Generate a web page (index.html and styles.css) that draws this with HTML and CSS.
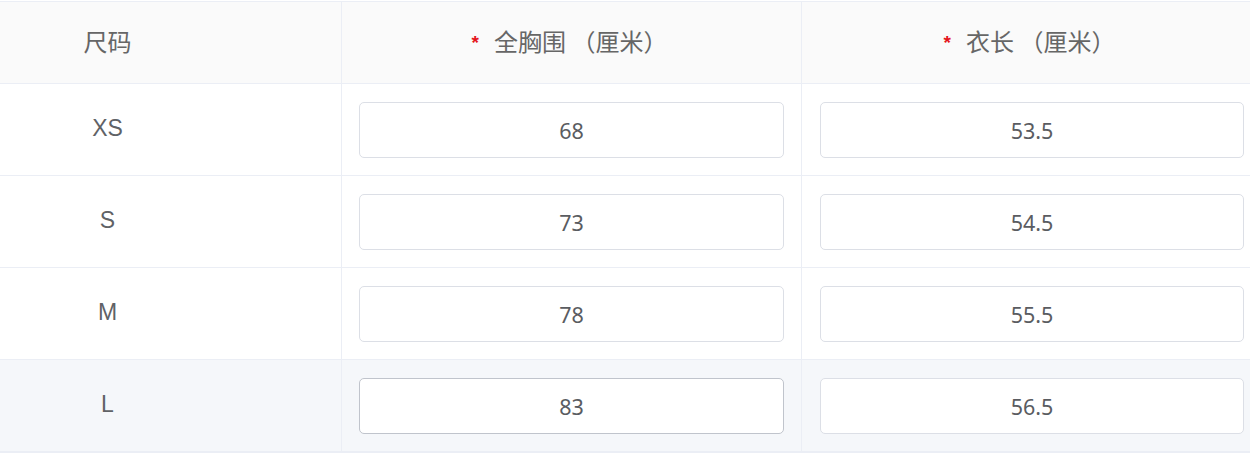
FILE: index.html
```html
<!DOCTYPE html>
<html lang="zh">
<head>
<meta charset="utf-8">
<title>尺码表</title>
<link rel="stylesheet" href="styles.css">
</head>
<body>
<div class="wrap">
  <div class="table">
    <div class="cell head first"><span class="size">尺码</span></div>
    <div class="cell head"><span class="star">*</span><span class="title">全胸围 （厘米）</span></div>
    <div class="cell head"><span class="star">*</span><span class="title">衣长 （厘米）</span></div>

    <div class="cell first"><span class="size latin">XS</span></div>
    <div class="cell"><div class="input">68</div></div>
    <div class="cell last-col"><div class="input">53.5</div></div>

    <div class="cell first"><span class="size latin">S</span></div>
    <div class="cell"><div class="input">73</div></div>
    <div class="cell last-col"><div class="input">54.5</div></div>

    <div class="cell first"><span class="size latin">M</span></div>
    <div class="cell"><div class="input">78</div></div>
    <div class="cell last-col"><div class="input">55.5</div></div>

    <div class="cell first hover"><span class="size latin">L</span></div>
    <div class="cell hover"><div class="input active">83</div></div>
    <div class="cell last-col hover"><div class="input">56.5</div></div>
  </div>
</div>
</body>
</html>
```

FILE: styles.css
```css
html, body {
  margin: 0;
  padding: 0;
  background: #ffffff;
}
body {
  font-family: "Noto Sans", "Noto Sans CJK SC", sans-serif;
  color: #606266;
}
.wrap {
  width: 1250px;
  height: 456px;
  overflow: hidden;
  padding-top: 1px;
  box-sizing: border-box;
}
.table {
  display: grid;
  grid-template-columns: 342px 460px 460px;
  grid-auto-rows: 92px;
  grid-template-rows: 82px;
  width: 1262px;
  border-top: 1px solid #ebeef5;
  border-bottom: 1px solid #ebeef5;
}
.cell {
  box-sizing: border-box;
  border-right: 1px solid #ebeef5;
  border-bottom: 1px solid #ebeef5;
  display: flex;
  align-items: center;
  padding: 18px 17px 17px 17px;
  background: #ffffff;
}
.cell.last-col {
  padding-left: 18px;
}
.cell.head {
  background: #fafafa;
  justify-content: center;
  padding: 0 4px 4px 0;
  font-family: "Noto Sans CJK SC", sans-serif;
  font-size: 24px;
  color: #666666;
}
.cell.first {
  padding: 0;
  justify-content: flex-start;
}
.cell.head.first {
  padding-bottom: 4px;
}
.cell.hover {
  background: #f5f7fa;
}
.size {
  display: block;
  width: 215px;
  text-align: center;
  font-family: "Noto Sans CJK SC", sans-serif;
  font-size: 24px;
  color: #666666;
}
.size.latin {
  font-family: "Liberation Sans", Arial, sans-serif;
  font-size: 23px;
  color: #606266;
  padding-bottom: 2px;
}
.star {
  color: #e4141b;
  font-family: "Liberation Sans", sans-serif;
  font-size: 19px;
  font-weight: bold;
  margin-right: 15px;
  position: relative;
  top: 2px;
}
.title {
  white-space: pre;
}
.input {
  box-sizing: border-box;
  width: 100%;
  height: 56px;
  border: 1px solid #dcdfe6;
  border-radius: 5px;
  background: #ffffff;
  display: flex;
  align-items: center;
  justify-content: center;
  font-family: "Noto Sans", "Open Sans", sans-serif;
  font-size: 21.5px;
  color: #5a5c61;
}
.input.active {
  border-color: #c0c4cc;
}
```
